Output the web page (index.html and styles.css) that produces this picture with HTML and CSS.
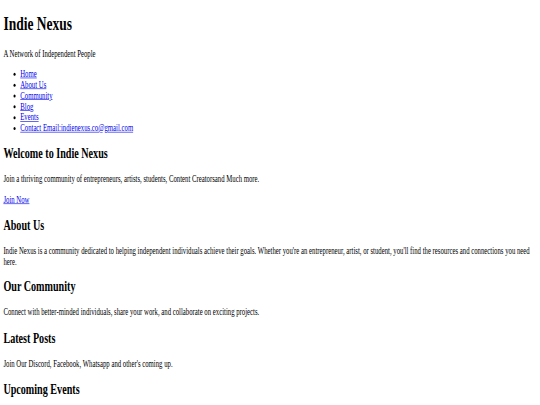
FILE: index.html
```html
<!DOCTYPE html>
<html lang="en">
<head>
  <meta charset="UTF-8">
  <meta name="viewport" content="width=device-width, initial-scale=1.0">
  <title>Indie Nexus</title>
  <link rel="stylesheet" href="styles.css">
</head>
<body>
  <div class="page">
    <header>
      <h1>Indie Nexus</h1>
      <p>A Network of Independent People</p>
      <nav>
        <ul>
          <li><a href="#home">Home</a></li>
          <li><a href="#about">About Us</a></li>
          <li><a href="#community">Community</a></li>
          <li><a href="#blog">Blog</a></li>
          <li><a href="#events">Events</a></li>
          <li><a href="mailto:indienexus.co@gmail.com">Contact Email:indienexus.co@gmail.com</a></li>
        </ul>
      </nav>
    </header>

    <section id="home">
      <h2>Welcome to Indie Nexus</h2>
      <p>Join a thriving community of entrepreneurs, artists, students, Content Creatorsand Much more.</p>
      <p><a href="#join">Join Now</a></p>
    </section>

    <section id="about">
      <h2>About Us</h2>
      <p>Indie Nexus is a community dedicated to helping independent individuals achieve their goals. Whether you're an entrepreneur, artist, or student, you'll find the resources and connections you need here.</p>
    </section>

    <section id="community">
      <h2>Our Community</h2>
      <p>Connect with better-minded individuals, share your work, and collaborate on exciting projects.</p>
    </section>

    <section id="blog">
      <h2>Latest Posts</h2>
      <p>Join Our Discord, Facebook, Whatsapp and other's coming up.</p>
    </section>

    <section id="events">
      <h2>Upcoming Events</h2>
    </section>
  </div>
</body>
</html>
```

FILE: styles.css
```css
html,
body {
    margin: 0;
    padding: 0;
    overflow: hidden;
    background: #fff;
}

/* the page was laid out at desktop width, then squeezed down */
.page {
    display: flow-root;
    width: 1264px;
    padding: 0 8px;
    font-family: "Liberation Serif", "Times New Roman", serif;
    font-size: 16px;
    color: #000;
    transform: scale(0.421875, 0.602);
    transform-origin: 0 0;
}

a {
    color: #0000ee;
}
```
